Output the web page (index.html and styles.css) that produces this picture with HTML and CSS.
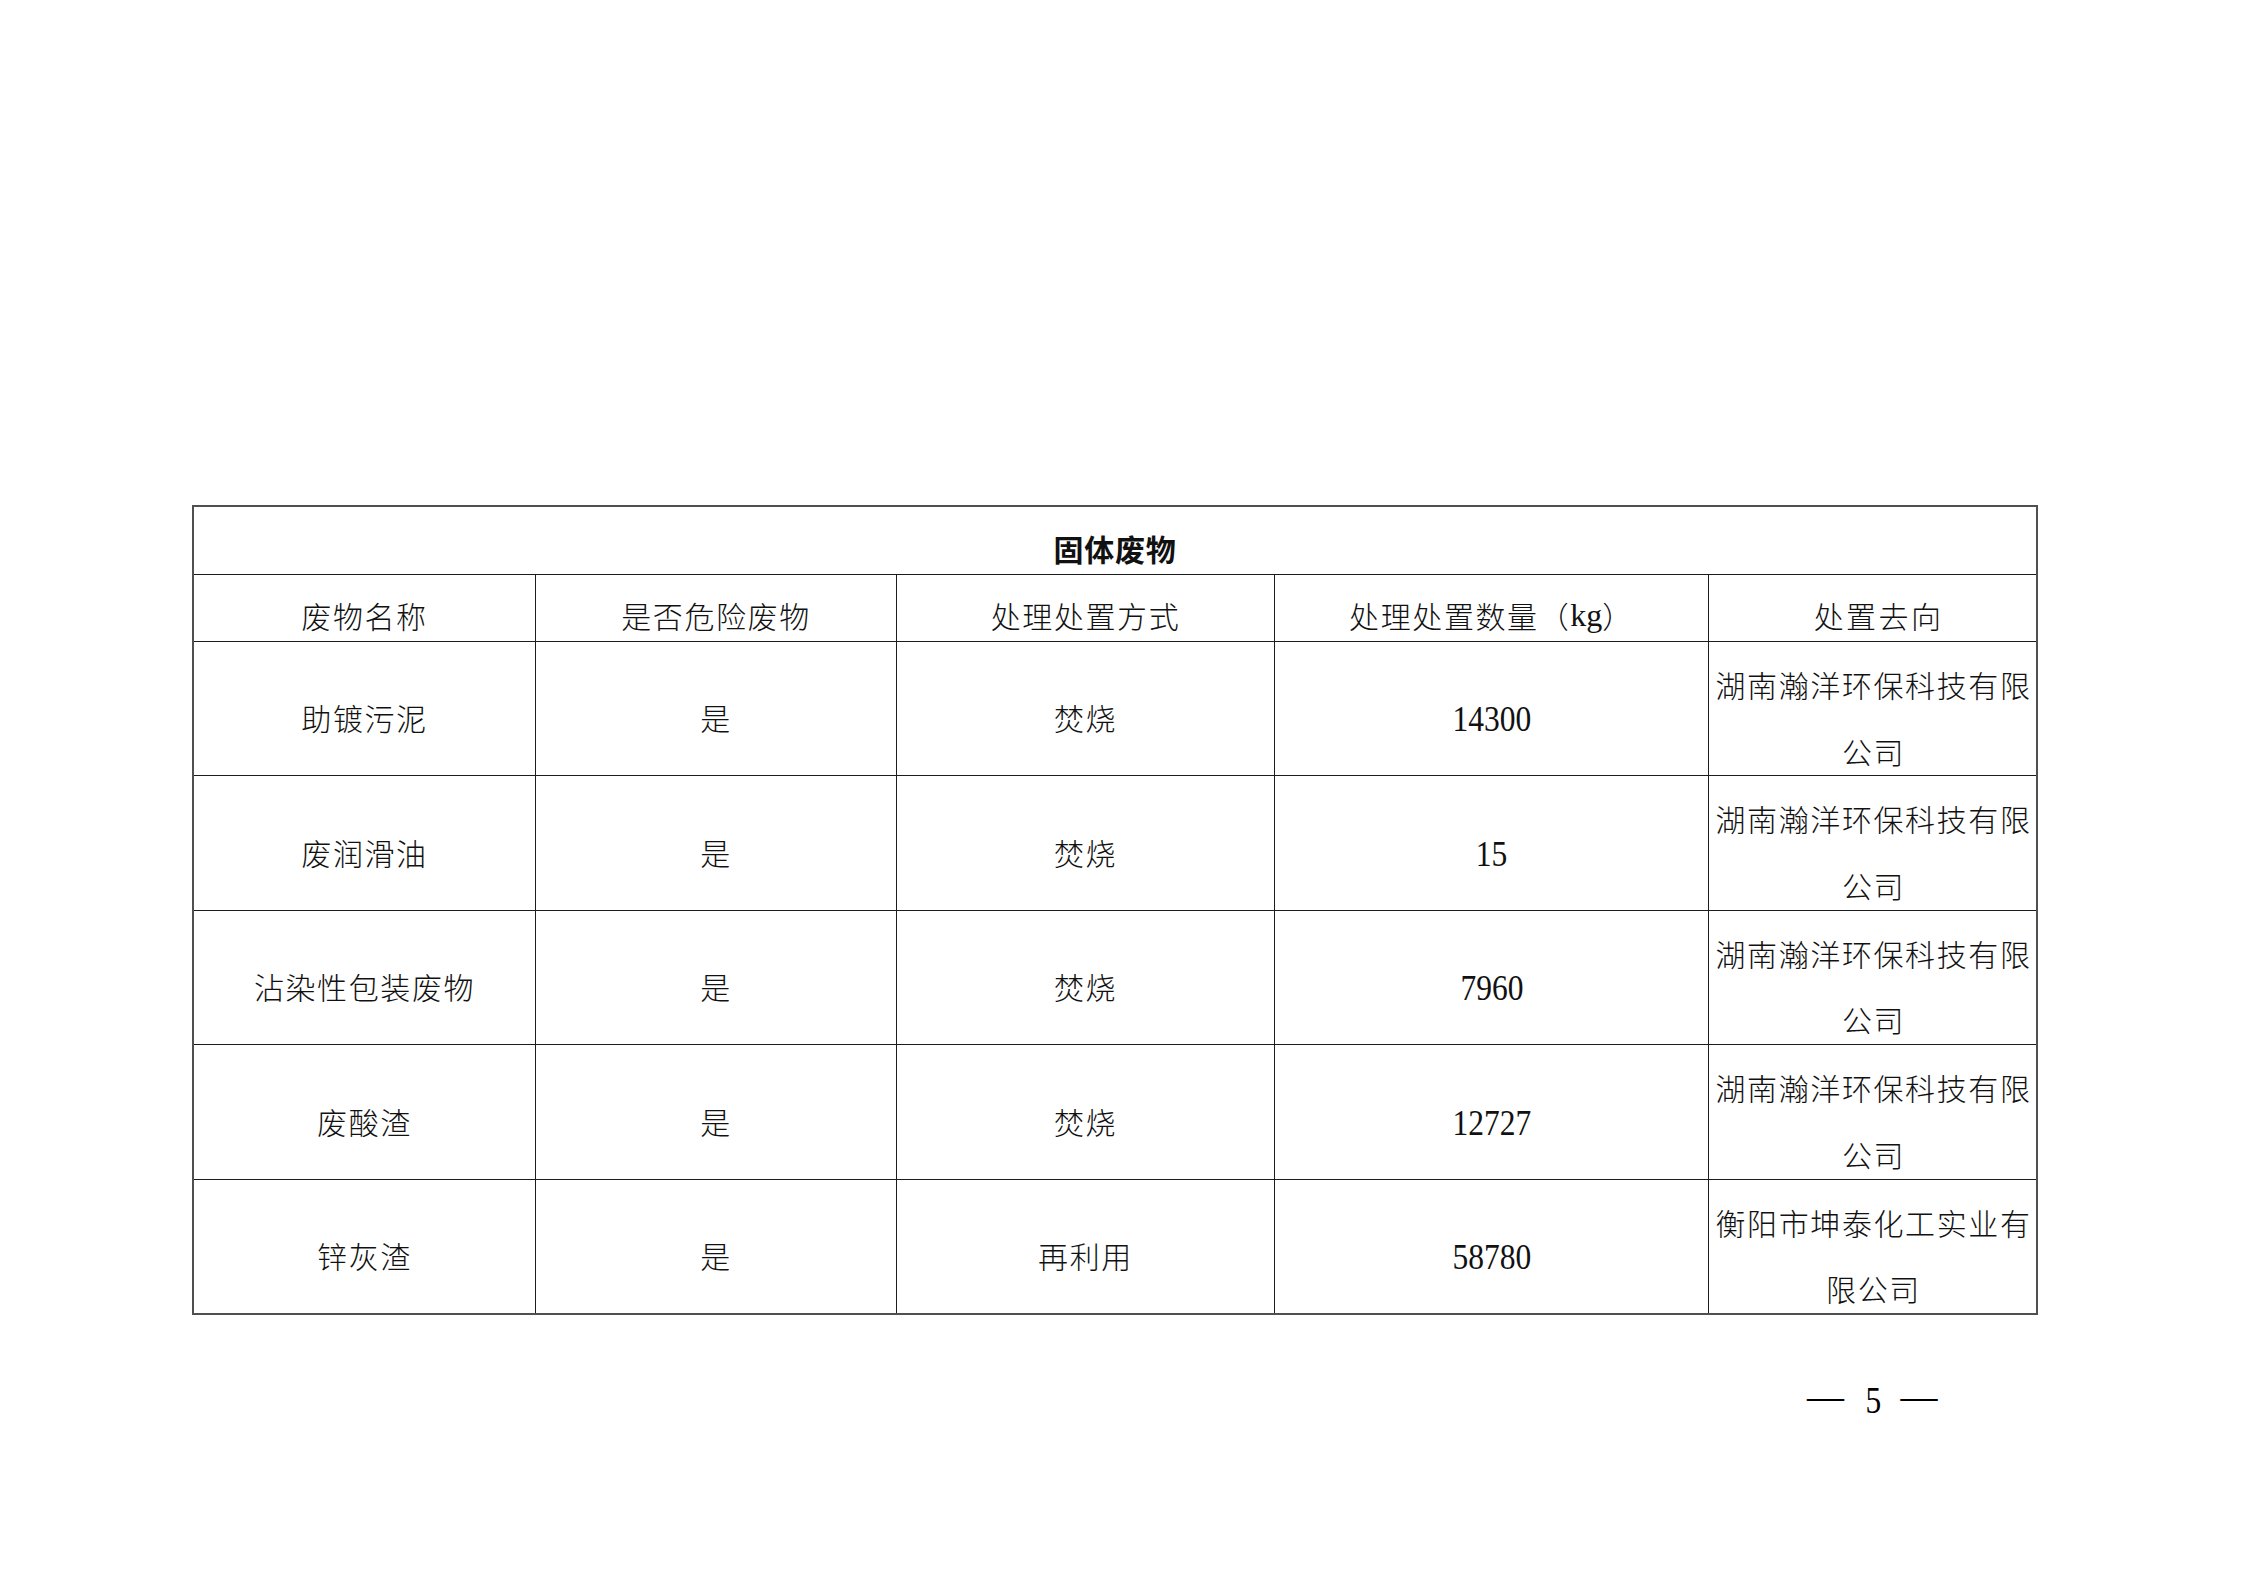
FILE: index.html
```html
<!DOCTYPE html>
<html lang="zh-CN">
<head>
<meta charset="utf-8">
<title>固体废物</title>
<link rel="stylesheet" href="styles.css">
</head>
<body>
<div class="page">
  <div class="waste-table">
    <div class="cell title">固体废物</div>

    <div class="cell head">废物名称</div>
    <div class="cell head">是否危险废物</div>
    <div class="cell head">处理处置方式</div>
    <div class="cell head">处理处置数量（<span class="latin">kg</span>）</div>
    <div class="cell head dest">处置去向</div>

    <div class="cell">助镀污泥</div>
    <div class="cell">是</div>
    <div class="cell">焚烧</div>
    <div class="cell"><span class="num">14300</span></div>
    <div class="cell wrap">湖南瀚洋环保科技有限公司</div>

    <div class="cell">废润滑油</div>
    <div class="cell">是</div>
    <div class="cell">焚烧</div>
    <div class="cell"><span class="num">15</span></div>
    <div class="cell wrap">湖南瀚洋环保科技有限公司</div>

    <div class="cell">沾染性包装废物</div>
    <div class="cell">是</div>
    <div class="cell">焚烧</div>
    <div class="cell"><span class="num">7960</span></div>
    <div class="cell wrap">湖南瀚洋环保科技有限公司</div>

    <div class="cell">废酸渣</div>
    <div class="cell">是</div>
    <div class="cell">焚烧</div>
    <div class="cell"><span class="num">12727</span></div>
    <div class="cell wrap">湖南瀚洋环保科技有限公司</div>

    <div class="cell">锌灰渣</div>
    <div class="cell">是</div>
    <div class="cell">再利用</div>
    <div class="cell"><span class="num">58780</span></div>
    <div class="cell wrap">衡阳市坤泰化工实业有限公司</div>
  </div>

  <div class="page-num">
    <span class="dash">—</span>
    <span class="pn">5</span>
    <span class="dash">—</span>
  </div>
</div>
</body>
</html>
```

FILE: styles.css
```css
html, body {
  margin: 0;
  padding: 0;
  background: #ffffff;
}

body {
  width: 2245px;
  height: 1587px;
  overflow: hidden;
  font-family: "Noto Sans CJK SC", "Liberation Serif", serif;
  color: #111111;
}

.page {
  padding-top: 505px;
  padding-left: 192px;
}

.waste-table {
  display: grid;
  grid-template-columns: 341px 360px 377px 433px 327px;
  grid-template-rows: 67px 66px repeat(5, 133.4px);
  gap: 1px;
  width: max-content;
  background: #1c1c1c;
  border: 2px solid #505050;
}

.cell {
  background: #ffffff;
  display: flex;
  align-items: center;
  justify-content: center;
  text-align: center;
  padding-top: 18px;
  box-sizing: border-box;
  font-size: 30px;
  font-weight: 300;
  letter-spacing: 1.6px;
  line-height: 66.7px;
}

.cell.title {
  grid-column: 1 / -1;
  font-weight: 700;
  letter-spacing: 0.8px;
  padding-top: 15px;
}

.cell.head {
  padding-top: 14px;
}

.cell.head.dest {
  padding-left: 12px;
  letter-spacing: 2.4px;
}

.cell.wrap {
  padding-left: 4px;
  padding-right: 2px;
}

.latin {
  font-family: "Liberation Serif", serif;
  font-size: 32px;
  letter-spacing: 0;
}

.num {
  display: inline-block;
  margin-top: 6px;
  font-family: "Liberation Serif", serif;
  font-size: 35px;
  letter-spacing: 0;
  transform: scaleX(0.9);
}

.page-num {
  display: flex;
  align-items: center;
  margin-top: 67px;
  padding-left: 1807px;
  margin-left: -192px;
  height: 37px;
  font-family: "Liberation Serif", serif;
  font-size: 37px;
  line-height: 37px;
  color: #000000;
}

.page-num .dash {
  display: inline-block;
  position: relative;
  top: -4px;
}

.page-num .pn {
  display: inline-block;
  margin: 0 18px 0 20px;
  transform: scaleX(0.85);
}
```
